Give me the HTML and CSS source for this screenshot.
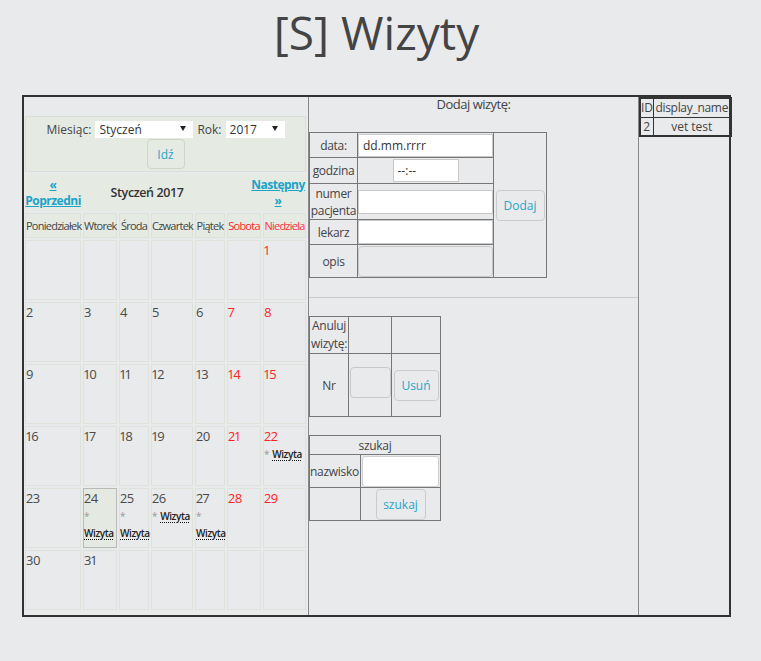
FILE: index.html
```html
<!DOCTYPE html>
<html lang="pl">
<head>
<meta charset="utf-8">
<title>[S] Wizyty</title>
<link rel="stylesheet" href="styles.css">
</head>
<body>
<h1 class="title">[S] Wizyty</h1>
<div class="frame">
  <div class="col col-cal">
    <table class="cal">
      <colgroup>
        <col class="c1"><col class="c2"><col class="c3"><col class="c4"><col class="c5"><col class="c6"><col class="c7">
      </colgroup>
      <tr class="r-form">
        <td colspan="7" class="cal-form">
          <form class="cal-form-in">
            <div class="sel-line">
              <label>Miesiąc:</label>
              <span class="sel-wrap"><select class="sel sel-m"><option>Styczeń</option><option>Luty</option></select><span class="arrow"></span></span>
              <label>Rok:</label>
              <span class="sel-wrap"><select class="sel sel-y"><option>2017</option><option>2018</option></select><span class="arrow"></span></span>
            </div>
            <button type="button" class="btn btn-idz">Idź</button>
          </form>
        </td>
      </tr>
      <tr class="r-nav">
        <td colspan="7" class="cal-nav">
          <div class="nav">
            <div class="nav-side"><a href="#">« Poprzedni</a></div>
            <div class="nav-mid">Styczeń 2017</div>
            <div class="nav-side"><a href="#">Następny »</a></div>
          </div>
        </td>
      </tr>
      <tr class="r-dn">
        <td>Poniedziałek</td><td>Wtorek</td><td>Środa</td><td>Czwartek</td><td>Piątek</td><td class="sat">Sobota</td><td class="sun">Niedziela</td>
      </tr>
      <tr class="r-wk">
        <td></td><td></td><td></td><td></td><td></td><td></td>
        <td class="sun"><div class="num">1</div></td>
      </tr>
      <tr class="r-wk">
        <td><div class="num">2</div></td><td><div class="num">3</div></td><td><div class="num">4</div></td><td><div class="num">5</div></td><td><div class="num">6</div></td><td class="sat"><div class="num">7</div></td><td class="sun"><div class="num">8</div></td>
      </tr>
      <tr class="r-wk">
        <td><div class="num">9</div></td><td><div class="num">10</div></td><td><div class="num">11</div></td><td><div class="num">12</div></td><td><div class="num">13</div></td><td class="sat"><div class="num">14</div></td><td class="sun"><div class="num">15</div></td>
      </tr>
      <tr class="r-wk">
        <td><div class="num">16</div></td><td><div class="num">17</div></td><td><div class="num">18</div></td><td><div class="num">19</div></td><td><div class="num">20</div></td><td class="sat"><div class="num">21</div></td>
        <td class="sun"><div class="num">22</div><div class="ev"><span class="star">*</span> <abbr title="Wizyta">Wizyta</abbr></div></td>
      </tr>
      <tr class="r-wk">
        <td><div class="num">23</div></td>
        <td class="today"><div class="num">24</div><div class="ev"><span class="star">*</span> <abbr title="Wizyta">Wizyta</abbr></div></td>
        <td><div class="num">25</div><div class="ev"><span class="star">*</span> <abbr title="Wizyta">Wizyta</abbr></div></td>
        <td><div class="num">26</div><div class="ev"><span class="star">*</span> <abbr title="Wizyta">Wizyta</abbr></div></td>
        <td><div class="num">27</div><div class="ev"><span class="star">*</span> <abbr title="Wizyta">Wizyta</abbr></div></td>
        <td class="sat"><div class="num">28</div></td>
        <td class="sun"><div class="num">29</div></td>
      </tr>
      <tr class="r-wk">
        <td><div class="num">30</div></td><td><div class="num">31</div></td><td></td><td></td><td></td><td></td><td></td>
      </tr>
    </table>
  </div>

  <div class="col col-mid">
    <div class="mid-title">Dodaj wizytę:</div>
    <table class="add">
      <colgroup><col class="a1"><col class="a2"><col class="a3"></colgroup>
      <tr class="ar1">
        <td class="lbl">data:</td>
        <td><input class="in-full" type="text" placeholder="dd.mm.rrrr"></td>
        <td rowspan="5" class="btn-cell"><button type="button" class="btn btn-dodaj">Dodaj</button></td>
      </tr>
      <tr class="ar2">
        <td class="lbl">godzina</td>
        <td><input class="in-time" type="text" placeholder="--:--"></td>
      </tr>
      <tr class="ar3">
        <td class="lbl">numer pacjenta</td>
        <td><input class="in-full in-24" type="text"></td>
      </tr>
      <tr class="ar4">
        <td class="lbl">lekarz</td>
        <td><input class="in-full in-24" type="text"></td>
      </tr>
      <tr class="ar5">
        <td class="lbl">opis</td>
        <td><textarea class="ta"></textarea></td>
      </tr>
    </table>

    <hr class="sep">

    <table class="cancel">
      <colgroup><col class="k1"><col class="k2"><col class="k3"></colgroup>
      <tr class="kr1">
        <td class="lbl">Anuluj wizytę:</td><td></td><td></td>
      </tr>
      <tr class="kr2">
        <td class="lbl">Nr</td>
        <td><input class="nr-in" type="text"></td>
        <td><button type="button" class="btn btn-usun">Usuń</button></td>
      </tr>
    </table>

    <table class="search">
      <colgroup><col class="s1"><col class="s2"></colgroup>
      <tr class="sr1"><td colspan="2" class="lbl">szukaj</td></tr>
      <tr class="sr2">
        <td class="lbl naz">nazwisko</td>
        <td class="left"><input class="naz-in" type="text"></td>
      </tr>
      <tr class="sr3">
        <td></td>
        <td><button type="button" class="btn btn-szukaj">szukaj</button></td>
      </tr>
    </table>
  </div>

  <div class="col col-right">
    <table class="users">
      <colgroup><col class="u1"><col class="u2"></colgroup>
      <tr class="ur1"><td>ID</td><td class="dn">display_name</td></tr>
      <tr class="ur2"><td>2</td><td>vet test</td></tr>
    </table>
  </div>
</div>
</body>
</html>
```

FILE: styles.css
```css
html, body {
  margin: 0;
  padding: 0;
}

body {
  background: #e9eaec;
  color: #444;
  font-family: "Open Sans", "Noto Sans", sans-serif;
  font-size: 12px;
}

.title {
  margin: 0 0 35px 22px;
  width: 709px;
  padding-top: 4px;
  height: 56px;
  line-height: 56px;
  font-size: 46px;
  font-weight: 400;
  text-align: center;
  color: #444;
}

.frame {
  margin-left: 22px;
  width: 709px;
  height: 522px;
  box-sizing: border-box;
  border: 2px solid #333;
  display: flex;
}

.col {
  box-sizing: border-box;
  flex: none;
}

.col-cal {
  width: 285px;
  border-right: 1px solid #888;
}

.col-mid {
  width: 330px;
  border-right: 1px solid #888;
}

.col-right {
  flex: 1;
}

/* calendar */
.cal {
  table-layout: fixed;
  width: 285px;
  border-collapse: separate;
  border-spacing: 2px;
  margin: 17px 0 0 -1px;
}

.c1 { width: 56px; }
.c2 { width: 34px; }
.c3 { width: 30px; }
.c4 { width: 42px; }
.c5 { width: 30px; }
.c6 { width: 34px; }
.c7 { width: 43px; }

.cal td {
  padding: 0;
}

.r-form { height: 56px; }
.r-nav { height: 37px; }
.r-dn { height: 25px; }
.r-wk { height: 60px; }

.cal-form {
  background: #e5eae3;
  border: 1px solid #d9dfd6;
  text-align: center;
  vertical-align: top;
}

.cal-form-in {
  margin: 0;
}

.sel-line {
  display: flex;
  justify-content: center;
  align-items: center;
  gap: 4px;
  height: 20px;
  margin-top: 2px;
  color: #444;
}

.sel-wrap {
  position: relative;
  display: block;
}

.sel {
  -webkit-appearance: none;
  appearance: none;
  display: block;
  border: 0;
  border-radius: 0;
  background: #fff;
  height: 17px;
  padding: 0 0 0 4px;
  margin: 0;
  font-family: "Open Sans", "Noto Sans", sans-serif;
  font-size: 12px;
  color: #333;
}

.sel-m { width: 98px; }
.sel-y { width: 59px; }

.arrow {
  position: absolute;
  top: 5px;
  right: 7px;
  width: 0;
  height: 0;
  border-left: 3px solid transparent;
  border-right: 3px solid transparent;
  border-top: 5px solid #222;
  pointer-events: none;
}

.btn {
  font-family: "Open Sans", "Noto Sans", sans-serif;
  font-size: 12px;
  color: #2aa5c8;
  background: transparent;
  border: 1px solid #c9cccd;
  border-radius: 4px;
  height: 31px;
  padding: 0;
  margin: 0;
  cursor: pointer;
}

.btn-idz {
  display: block;
  margin: 0 auto;
  width: 38px;
  height: 30px;
  border-color: #cfd5cd;
}

.cal-nav {
  background: #e5eae3;
  vertical-align: middle;
}

.nav {
  display: flex;
  align-items: center;
}

.nav-side {
  width: 56px;
  flex: none;
  text-align: center;
  line-height: 16px;
  font-weight: 700;
  letter-spacing: -0.5px;
}

.nav-side a {
  color: #1ba3c8;
  text-decoration: underline;
}

.nav-mid {
  flex: 1;
  text-align: center;
  padding-right: 37px;
  font-weight: 600;
  font-size: 12.5px;
  letter-spacing: -0.4px;
  color: #333;
}

.r-dn td {
  background: #e5eae3;
  border: 1px solid #dce2d9;
  text-align: center;
  vertical-align: middle;
  font-size: 11px;
  letter-spacing: -0.75px;
  white-space: nowrap;
  color: #444;
}

.r-dn td.sat { color: #ff2424; }
.r-dn td.sun { color: #fb3049; }

.r-wk td {
  border: 1px solid #dde2db;
  vertical-align: top;
}

.r-wk td.today {
  background: #e4e9e1;
  border-color: #b7bab6;
}

.num {
  font-size: 13px;
  line-height: 16px;
  padding-top: 1px;
  height: 15px;
  color: #4a4a4a;
  font-variant-numeric: proportional-nums;
  letter-spacing: -0.3px;
}

.sat .num,
.sun .num {
  color: #ff2424;
}

.ev {
  margin-top: 3px;
  font-size: 10px;
  line-height: 17px;
}

.star {
  color: #999;
}

.ev abbr {
  color: #222;
  font-weight: 600;
  letter-spacing: -0.4px;
  text-decoration-line: underline;
  text-decoration-style: dotted;
  text-decoration-color: #111;
  text-underline-offset: 2px;
}

/* middle column */
.mid-title {
  text-align: center;
  font-size: 13px;
  line-height: 14px;
  letter-spacing: -0.5px;
  color: #444;
}

.add,
.cancel,
.search {
  border-collapse: collapse;
  border: 1px solid #333;
  table-layout: fixed;
}

.add td,
.cancel td,
.search td {
  border: 1px solid #777;
  padding: 0;
  text-align: center;
  vertical-align: middle;
}

.add {
  margin-top: 21px;
  width: 237px;
}

.a1 { width: 48px; }
.a2 { width: 136px; }
.a3 { width: 53px; }

.ar1 { height: 25px; }
.ar2 { height: 26px; }
.ar3 { height: 36px; }
.ar4 { height: 25px; }
.ar5 { height: 33px; }

.lbl {
  font-size: 12px;
  line-height: 17px;
  letter-spacing: -0.3px;
  color: #444;
}

.in-full,
.in-time {
  display: block;
  box-sizing: border-box;
  height: 23px;
  border: 1px solid #c8c8c8;
  background: #fff;
  padding: 0 4px;
  margin: 0;
  font-family: "Open Sans", "Noto Sans", sans-serif;
  font-size: 12px;
  color: #333;
}

.in-full {
  width: 100%;
}

.in-24 {
  height: 24px;
}

.in-time {
  width: 66px;
  margin: 0 auto;
}

.in-full::placeholder,
.in-time::placeholder {
  color: #333;
  opacity: 1;
}

.ta {
  display: block;
  box-sizing: border-box;
  width: 100%;
  height: 31px;
  margin: 0;
  border: 1px solid #c6c8ca;
  border-radius: 4px;
  background: transparent;
  resize: none;
}

.btn-cell {
  vertical-align: middle;
}

.btn-dodaj {
  width: 49px;
}

.sep {
  margin: 19px 0 18px;
  border: 0;
  border-top: 1px solid #c9cacc;
  height: 0;
}

.cancel {
  width: 131px;
}

.k1 { width: 39px; }
.k2 { width: 43px; }
.k3 { width: 49px; }

.kr1 { height: 37px; }
.kr2 { height: 63px; }

.kr1 .lbl {
  line-height: 18px;
}

.nr-in {
  display: block;
  box-sizing: border-box;
  width: 41px;
  height: 31px;
  margin: 0 auto 6px;
  border: 1px solid #c6c8ca;
  border-radius: 4px;
  background: transparent;
}

.btn-usun {
  width: 45px;
}

.search {
  margin-top: 18px;
  width: 131px;
}

.s1 { width: 51px; }
.s2 { width: 80px; }

.sr1 { height: 19px; }
.sr2 { height: 33px; }
.sr3 { height: 33px; }

.search td.naz {
  text-align: left;
  white-space: nowrap;
}

.search td.left {
  text-align: left;
}

.naz-in {
  display: block;
  box-sizing: border-box;
  width: 77px;
  height: 31px;
  margin: 0 0 0 1px;
  border: 1px solid #cfcfcf;
  border-radius: 3px;
  background: #fff;
}

.btn-szukaj {
  width: 50px;
}

/* right column */
.users {
  border-collapse: collapse;
  border: 2px solid #333;
  table-layout: fixed;
  width: 91px;
}

.u1 { width: 13px; }
.u2 { width: 78px; }

.users td {
  border: 1px solid #333;
  padding: 0;
  text-align: center;
  line-height: 17px;
  font-size: 12px;
  color: #444;
  white-space: nowrap;
}

.users td.dn {
  letter-spacing: -0.3px;
}

.ur1 { height: 19px; }
.ur2 { height: 18px; }
```
